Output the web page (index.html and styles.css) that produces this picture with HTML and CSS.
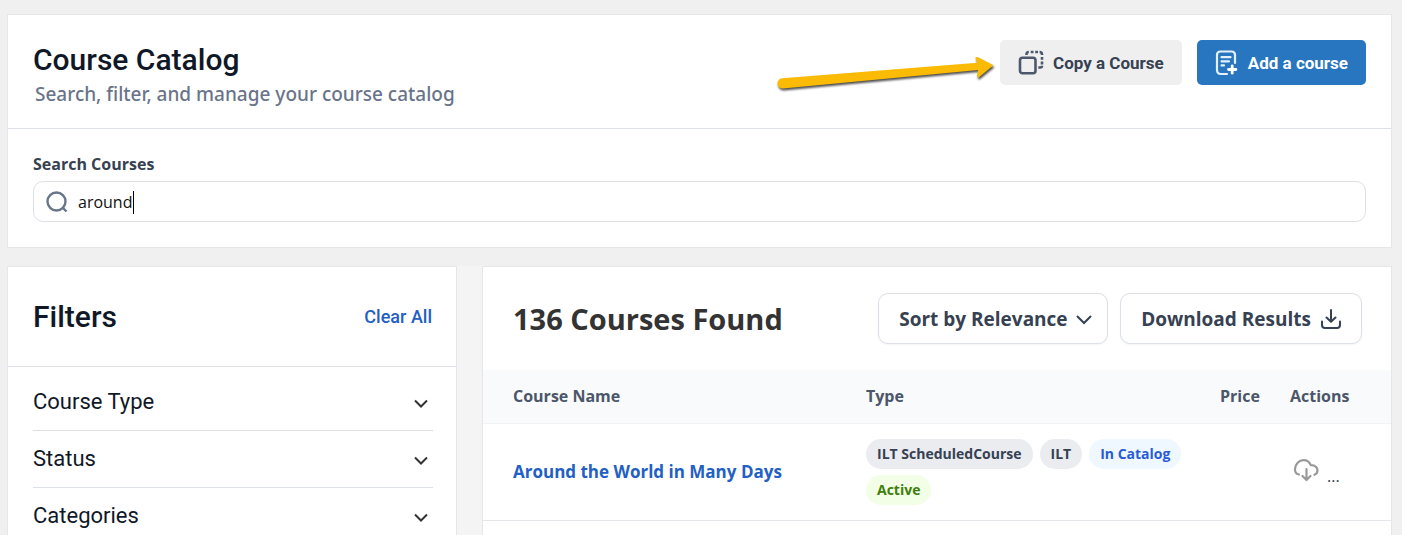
FILE: index.html
```html
<!DOCTYPE html>
<html lang="en">

<head>
    <meta charset="UTF-8">
    <meta name="viewport" content="width=device-width, initial-scale=1.0">
    <title>Course Catalog</title>
    <link rel="stylesheet" href="styles.css">
</head>

<body>
    <header class="card">
        <div class="catalog-head">
            <div>
                <h1>Course Catalog</h1>
                <p class="subtitle">Search, filter, and manage your course catalog</p>
            </div>
            <div class="actions">
                <button class="button copy" type="button">
                    <svg class="arrow" width="228" height="44" viewBox="0 0 228 44" aria-hidden="true">
                        <path d="M10.5 28.3 L205.5 12.7 L203.5 9 Q203 6.5 206 7.3 L221.5 15.3 L207.5 26.8 Q204.5 28.5 205 25.5 L206 20 L10.5 38.5 A5 5 0 0 1 10.5 28.3 Z" fill="#fbbb04" />
                    </svg>
                    <svg width="26" height="26" viewBox="0 0 26 26" fill="none" stroke="#4d586c" stroke-width="2.6" aria-hidden="true">
                        <rect x="2" y="7.8" width="15.5" height="15.5" rx="2.5" />
                        <path d="M8.5 5V4.5Q8.5 2 10.8 2M12.7 2h2.8M17.2 2H20M21.6 2q2.4 0 2.4 2.3v.8M24 7v2.8M24 11.6v2.8M24 15.8q0 1.7-1.7 1.7h-2" />
                    </svg>
                    Copy a Course
                </button>
                <button class="button add" type="button">
                    <svg width="24" height="26" viewBox="0 0 24 26" fill="none" stroke="#e4f0fb" stroke-width="2.2" stroke-linecap="round" aria-hidden="true">
                        <path d="M12 24H6q-4 0-4-4V5q0-3.5 3.5-3.5h11q3.5 0 3.5 3.500v8" />
                        <path d="M6.5 7.2h9M6.5 11.3h7.5M6.5 15.4h2.5" />
                        <path d="M17.2 15.8v7.4M13.5 19.5h7.4" stroke="#fff" stroke-width="2.8" />
                    </svg>
                    Add a course
                </button>
            </div>
        </div>
        <div class="search">
            <label for="search">Search Courses</label>
            <div class="search-box">
                <svg width="22" height="22" viewBox="0 0 22 22" fill="none" stroke="#68758a" stroke-width="2.4" aria-hidden="true">
                    <circle cx="10.5" cy="10.5" r="9" />
                    <path d="M16.500 16.5l4 4" />
                </svg>
                <input id="search" type="text" value="around">
            </div>
        </div>
    </header>

    <div class="columns">
        <aside class="card filters">
            <div class="filters-head">
                <h2>Filters</h2>
                <a href="#">Clear All</a>
            </div>
            <div class="filter-list">
                <button class="filter" type="button">Course Type
                    <svg width="14" height="10" viewBox="0 0 14 10" fill="none" stroke="#333" stroke-width="2" aria-hidden="true"><path d="M1 1.5l6 6 6-6" /></svg>
                </button>
                <button class="filter" type="button">Status
                    <svg width="14" height="10" viewBox="0 0 14 10" fill="none" stroke="#333" stroke-width="2" aria-hidden="true"><path d="M1 1.5l6 6 6-6" /></svg>
                </button>
                <button class="filter" type="button">Categories
                    <svg width="14" height="10" viewBox="0 0 14 10" fill="none" stroke="#333" stroke-width="2" aria-hidden="true"><path d="M1 1.5l6 6 6-6" /></svg>
                </button>
            </div>
        </aside>

        <main class="card results">
            <div class="results-head">
                <h2>136 Courses Found</h2>
                <div class="sort">
                    <select class="outline" aria-label="Sort">
                        <option>Sort by Relevance</option>
                    </select>
                    <svg width="16" height="10" viewBox="0 0 16 10" fill="none" stroke="#364152" stroke-width="2" stroke-linecap="round" aria-hidden="true"><path d="M1.5 1.5L8 8l6.5-6.5" /></svg>
                </div>
                <button class="outline" type="button">
                    Download Results
                    <svg width="20" height="20" viewBox="0 0 20 20" fill="none" stroke="#364152" stroke-width="2" stroke-linecap="round" stroke-linejoin="round" aria-hidden="true">
                        <path d="M10 1v11.500M5.5 8.500l4.5 4.3 4.5-4.3M1 12.5v3.5q0 3 3 3h12q3 0 3-3v-3.5" />
                    </svg>
                </button>
            </div>
            <table>
                <thead>
                    <tr>
                        <th class="col-name">Course Name</th>
                        <th>Type</th>
                        <th class="col-price">Price</th>
                        <th class="col-actions">Actions</th>
                    </tr>
                </thead>
                <tbody>
                    <tr>
                        <td><a class="course" href="#">Around the World in Many Days</a></td>
                        <td>
                            <div class="badges">
                                <span class="badge">ILT ScheduledCourse</span>
                                <span class="badge">ILT</span>
                                <span class="badge blue">In Catalog</span>
                                <span class="badge green">Active</span>
                            </div>
                        </td>
                        <td></td>
                        <td>
                            <div class="row-actions">
                                <button type="button" aria-label="Download">
                                    <svg width="26" height="24" viewBox="0 0 26 24" fill="none" stroke="#999" stroke-width="2.2" stroke-linecap="round" stroke-linejoin="round" aria-hidden="true">
                                        <path d="M6 16.5C3.3 15.8 1.8 13.3 2 10.8 2.3 6 6 2.2 10.5 2.2c3.5 0 6 1.8 7.3 5C22 7 24.5 9.5 24.5 12.5c0 2-1.2 3.5-3 4.3" />
                                        <path d="M13.5 11v10.5M9.5 18l4 4 4-4" />
                                    </svg>
                                </button>
                                <button type="button" aria-label="More">...</button>
                            </div>
                        </td>
                    </tr>
                    <tr>
                        <td colspan="4"></td>
                    </tr>
                </tbody>
            </table>
        </main>
    </div>
</body>

</html>
```

FILE: styles.css
```css
* {
    box-sizing: border-box;
}

body {
    margin: 0;
    padding: 14px 10px 0 7px;
    background: #f0f0f0;
    color: #364152;
    font-family: "Open Sans", "Noto Sans", sans-serif;
}

h1,
h2,
p {
    margin: 0;
}

button,
input,
select {
    font-family: inherit;
    color: inherit;
}

button {
    padding: 0;
    background: none;
    border: none;
    cursor: pointer;
}

a {
    color: #2260c4;
    text-decoration: none;
}

.card {
    background: #fff;
    border: 1px solid #e6e6e6;
}

.catalog-head {
    display: flex;
    justify-content: space-between;
    align-items: flex-start;
    padding: 25px 25px 20px;
    border-bottom: 1px solid #dcdfe8;
}

h1 {
    color: #101828;
    font: 500 30px/40px Roboto, sans-serif;
}

.subtitle {
    padding-left: 2px;
    color: #697489;
    font: 500 19px/28px "Noto Sans", sans-serif;
}

.actions {
    display: flex;
    gap: 15px;
}

.button {
    position: relative;
    display: flex;
    align-items: center;
    gap: 9px;
    height: 45px;
    padding: 0 18px;
    border-radius: 5px;
    font: 700 17px/24px Roboto, sans-serif;
}

.copy {
    background: #efefef;
}

.add {
    background: #2876bf;
    color: #fff;
}

.arrow {
    position: absolute;
    top: 10px;
    right: 100%;
    overflow: visible;
    filter: drop-shadow(1px 2px 1px rgba(0, 0, 0, 0.7));
    pointer-events: none;
}

.search {
    padding: 24px 25px 25px;
}

.search label {
    display: block;
    margin-bottom: 6px;
    font-size: 16px;
    font-weight: 700;
    line-height: 22px;
}

.search-box {
    position: relative;
    display: flex;
    align-items: center;
    gap: 10px;
    height: 41px;
    padding: 0 12px;
    border: 1px solid #dcdfe6;
    border-radius: 10px;
}

/* text cursor */
.search-box::after {
    content: "";
    position: absolute;
    top: 9px;
    left: 99px;
    width: 1px;
    height: 23px;
    background: #000;
}

.search-box input {
    flex: 1;
    padding: 0;
    border: none;
    outline: none;
    background: none;
    color: #111;
    font-size: 16px;
    line-height: 24px;
}

.columns {
    display: grid;
    grid-template-columns: 45fr 91fr;
    gap: 25px;
    margin-top: 18px;
    background: #f4f4f4;
}

.filters-head {
    display: flex;
    justify-content: space-between;
    align-items: center;
    height: 100px;
    padding: 0 24px 0 25px;
    border-bottom: 1px solid #dcdfe8;
}

.filters-head h2 {
    color: #101828;
    font: 500 30px/40px Roboto, sans-serif;
}

.filters-head a {
    font: 500 18px/24px Roboto, sans-serif;
}

.filter-list {
    padding: 7px 23px 0 25px;
}

.filter {
    display: flex;
    justify-content: space-between;
    align-items: center;
    width: 100%;
    height: 57px;
    padding-right: 5px;
    border-bottom: 1px solid #dcdfe8;
    color: #101828;
    font: 400 22px/28px Roboto, sans-serif;
}

.filter svg {
    margin-top: 4px;
}

.results-head {
    display: flex;
    align-items: center;
    gap: 12px;
    padding: 26px 29px 26px 30px;
}

.results-head h2 {
    flex: 1;
    color: #333;
    font-size: 29px;
    font-weight: 700;
    line-height: 40px;
}

.outline {
    display: flex;
    align-items: center;
    gap: 10px;
    height: 51px;
    padding: 0 20px;
    border: 1px solid #dcdfe8;
    border-radius: 10px;
    background: #fff;
    box-shadow: 0 1px 2px rgba(16, 24, 40, 0.05);
    font-size: 19px;
    font-weight: 700;
}

.sort {
    position: relative;
}

.sort select {
    appearance: none;
    padding-right: 39px;
}

.sort svg {
    position: absolute;
    top: 22px;
    right: 16px;
    pointer-events: none;
}

table {
    width: 100%;
    border-collapse: collapse;
    table-layout: fixed;
}

th,
td {
    padding: 15px;
    text-align: left;
    border-bottom: 1px solid #e4e6ea;
}

th:first-child,
td:first-child {
    padding-left: 30px;
}

th {
    height: 53px;
    padding-top: 0;
    padding-bottom: 0;
    background: #f9fafb;
    border-color: #f0f2f4;
    color: #4b566a;
    font-size: 16px;
    font-weight: 700;
}

.col-name {
    width: 368px;
}

.col-price {
    width: 70px;
}

.col-actions {
    width: 116px;
}

.course {
    font-size: 17px;
    font-weight: 700;
}

.badges {
    display: flex;
    flex-wrap: wrap;
    gap: 6px 7px;
}

.badge {
    padding: 0 11px;
    border-radius: 15px;
    background: #eaecf0;
    font-size: 14px;
    font-weight: 700;
    line-height: 30px;
}

.badge.blue {
    background: #eff8ff;
    color: #2a5bd7;
}

.badge.green {
    background: #f3fee7;
    color: #3f7d0c;
}

.row-actions {
    display: flex;
    align-items: flex-end;
    gap: 8px;
    padding-left: 3px;
}

.row-actions button {
    font-size: 16px;
    line-height: 20px;
}
```
